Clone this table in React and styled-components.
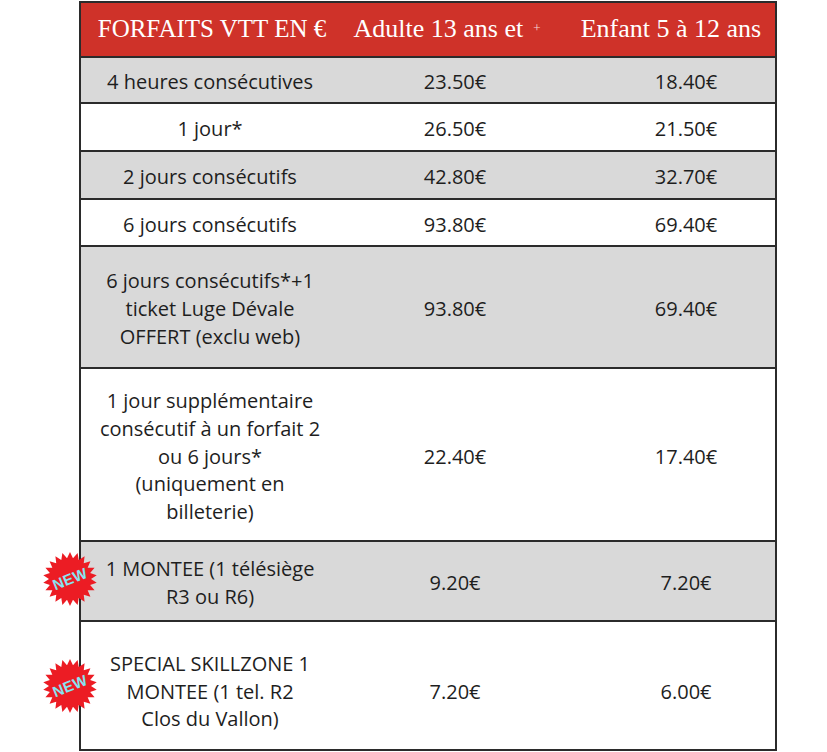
import React from 'react';
import styled, { createGlobalStyle } from 'styled-components';

const GlobalStyle = createGlobalStyle`
  html, body {
    margin: 0;
    padding: 0;
    background: #ffffff;
  }
  body {
    font-family: "Open Sans", "Liberation Sans", sans-serif;
  }
`;

const rows = [
  { label: ['4 heures consécutives'], adult: '23.50€', child: '18.40€', h: 46, shade: true },
  { label: ['1 jour*'], adult: '26.50€', child: '21.50€', h: 48 },
  { label: ['2 jours consécutifs'], adult: '42.80€', child: '32.70€', h: 48, shade: true },
  { label: ['6 jours consécutifs'], adult: '93.80€', child: '69.40€', h: 47 },
  {
    label: ['6 jours consécutifs*+1', 'ticket Luge Dévale', 'OFFERT (exclu web)'],
    adult: '93.80€', child: '69.40€', h: 122, shade: true,
  },
  {
    label: ['1 jour supplémentaire', 'consécutif à un forfait 2', 'ou 6 jours*', '(uniquement en', 'billeterie)'],
    adult: '22.40€', child: '17.40€', h: 173,
  },
  { label: ['1 MONTEE (1 télésiège', 'R3 ou R6)'], adult: '9.20€', child: '7.20€', h: 80, shade: true, isNew: true },
  {
    label: ['SPECIAL SKILLZONE 1', 'MONTEE (1 tel. R2', 'Clos du Vallon)'],
    adult: '7.20€', child: '6.00€', h: 127, isNew: true, offset: 8,
  },
];

const Page = styled.div`
  padding: 1px 0 0 79px;
`;

const Table = styled.div`
  width: 698px;
  border: 2px solid #2b2b2b;
  box-sizing: border-box;
`;

const HeaderRow = styled.div`
  display: grid;
  grid-template-columns: 262px 224px 1fr;
  height: 55px;
  align-items: center;
  background: #cf3229;
  border-bottom: 2px solid #2b2b2b;
  box-sizing: border-box;
`;

const HeadCell = styled.div`
  color: #ffffff;
  font-family: "Liberation Serif", "DejaVu Serif", serif;
  font-size: ${(p) => p.$size || 26}px;
  text-align: center;
  white-space: nowrap;
  margin-left: ${(p) => p.$shift || 0}px;
  padding-bottom: 2px;
`;

const Plus = styled.span`
  font-size: 13px;
  vertical-align: 5px;
  margin-left: 10px;
  opacity: 0.8;
`;

const Row = styled.div`
  position: relative;
  display: grid;
  grid-template-columns: 262px 224px 1fr;
  align-items: center;
  height: ${(p) => p.$h}px;
  padding-top: 4px;
  background: ${(p) => (p.$shade ? '#d9d9d9' : '#ffffff')};
  border-bottom: ${(p) => (p.$last ? 'none' : '2px solid #2b2b2b')};
  box-sizing: border-box;
  color: #1e1e1e;
  font-size: 20px;
  line-height: 27.8px;
`;

const Label = styled.div`
  text-align: center;
  white-space: nowrap;
  padding: 0 4px 0 0;
  margin-top: ${(p) => p.$offset || 0}px;
`;

const Price = styled.div`
  text-align: center;
  padding-left: ${(p) => p.$shift || 0}px;
  margin-top: ${(p) => p.$offset || 0}px;
`;

const Badge = styled.div`
  position: absolute;
  left: -38px;
  top: 50%;
  width: 54px;
  height: 54px;
  transform: translateY(-50%);
  margin-top: ${(p) => p.$offset || 0}px;
`;

const BadgeText = styled.span`
  position: absolute;
  left: 0;
  right: 0;
  top: 50%;
  text-align: center;
  transform: translateY(-50%) rotate(-22deg);
  font-family: "Liberation Sans", Arial, sans-serif;
  font-weight: 700;
  font-size: 15px;
  color: #86e4f2;
  letter-spacing: 0.3px;
`;

function starPoints(n, outer, inner, cx, cy) {
  const pts = [];
  for (let i = 0; i < n * 2; i++) {
    const r = i % 2 === 0 ? outer : inner;
    const a = (Math.PI * i) / n - Math.PI / 2;
    pts.push(`${(cx + r * Math.cos(a)).toFixed(2)},${(cy + r * Math.sin(a)).toFixed(2)}`);
  }
  return pts.join(' ');
}

function NewBadge({ offset }) {
  return (
    <Badge $offset={offset}>
      <svg width="54" height="54" viewBox="0 0 54 54">
        <polygon points={starPoints(22, 27, 21, 27, 27)} fill="#ec1c24" />
      </svg>
      <BadgeText>NEW</BadgeText>
    </Badge>
  );
}

export default function App() {
  return (
    <Page>
      <GlobalStyle />
      <Table>
        <HeaderRow>
          <HeadCell $size={25}>FORFAITS VTT EN €</HeadCell>
          <HeadCell $shift={-16}>
            Adulte 13 ans et<Plus>+</Plus>
          </HeadCell>
          <HeadCell>Enfant 5 à 12 ans</HeadCell>
        </HeaderRow>
        {rows.map((r, i) => (
          <Row key={i} $h={r.h} $shade={r.shade} $last={i === rows.length - 1}>
            {r.isNew && <NewBadge offset={r.offset ? 0 : -2} />}
            <Label $offset={r.offset}>
              {r.label.map((line, j) => (
                <div key={j}>{line}</div>
              ))}
            </Label>
            <Price $offset={r.offset}>{r.adult}</Price>
            <Price $shift={30} $offset={r.offset}>{r.child}</Price>
          </Row>
        ))}
      </Table>
    </Page>
  );
}
